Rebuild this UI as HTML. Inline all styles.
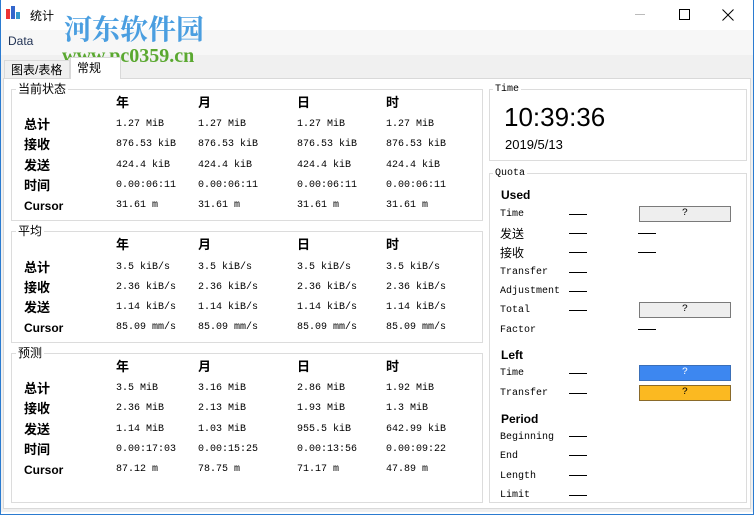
<!DOCTYPE html>
<html><head><meta charset="utf-8"><style>
*{margin:0;padding:0;box-sizing:border-box}
body{width:754px;height:515px;overflow:hidden;background:#fff;position:relative;font-family:"Liberation Sans","Noto Sans CJK SC",sans-serif;font-size:12px;color:#000}
.a{position:absolute;white-space:nowrap}
.g{position:absolute;border:1px solid #dcdcdc}
.gt{position:absolute;background:#fff;padding:0 2px;font-size:12px;line-height:14px}
.h{font-weight:bold;font-size:13px;line-height:14px}
.m{font-family:"Liberation Mono","Noto Sans CJK SC",monospace;font-size:10px;line-height:16px}
.mono{font-family:"Liberation Mono",monospace;font-size:10px;line-height:15px}
.d{position:absolute;width:18px;height:1px;background:#000}
.btn{position:absolute;width:92px;height:16px;border:1px solid #7a7a7a;background:#eee;text-align:center;font-family:"Liberation Mono",monospace;font-size:10px;line-height:14px}
</style></head><body>
<div class="a" style="left:0;top:0;width:754px;height:515px;border:1px solid #2b7bd0;border-top:none"></div>
<div class="a" style="left:1px;top:30px;width:752px;height:25px;background:#f7f7f7"></div>
<div class="a" style="left:1px;top:55px;width:752px;height:24px;background:#f0f0f0"></div>
<div class="a" style="left:1px;top:79px;width:752px;height:433px;background:#f0f0f0"></div>
<div class="a" style="left:6px;top:9px;width:4px;height:10px;background:#e33"></div>
<div class="a" style="left:11px;top:6px;width:4px;height:13px;background:#36c"></div>
<div class="a" style="left:16px;top:12px;width:4px;height:7px;background:#39c"></div>
<div class="a" style="left:30px;top:7px;font-size:12px">统计</div>
<div class="a" style="left:8px;top:34px;font-size:12px;color:#235">Data</div>
<div class="a" style="left:64px;top:12px;font-size:28px;font-weight:bold;color:#4a9ee0;font-family:'Noto Serif CJK SC',serif;line-height:32px">河东软件园</div>
<div class="a" style="left:62px;top:45px;font-size:20px;font-weight:bold;color:#5aa830;font-family:'Liberation Serif',serif;line-height:22px">www.pc0359.cn</div>
<div class="a" style="left:635px;top:14px;width:10px;height:1px;background:#bbb"></div>
<div class="a" style="left:679px;top:9px;width:11px;height:11px;border:1px solid #000"></div>
<svg class="a" style="left:722px;top:9px" width="12" height="12"><path d="M0.5 0.5L11.5 11.5M11.5 0.5L0.5 11.5" stroke="#000" stroke-width="1"/></svg>
<div class="a" style="left:4px;top:60px;width:66px;height:19px;border:1px solid #d9d9d9;border-bottom:none;background:#f0f0f0;font-size:12px;line-height:18px;padding-left:6px">图表/表格</div>
<div class="a" style="left:70px;top:57px;width:51px;height:23px;border:1px solid #d9d9d9;border-bottom:none;background:#fff;font-size:12px;line-height:20px;padding-left:6px">常规</div>
<div class="a" style="left:3px;top:78px;width:748px;height:431px;background:#fff;border:1px solid #d9d9d9"></div>
<div class="a" style="left:71px;top:78px;width:49px;height:2px;background:#fff"></div>

<div class="g" style="left:11px;top:89px;width:472px;height:132px"></div><div class="gt" style="left:16px;top:82px">当前状态</div>
<div class="g" style="left:11px;top:231px;width:472px;height:112px"></div><div class="gt" style="left:16px;top:224px">平均</div>
<div class="g" style="left:11px;top:353px;width:472px;height:150px"></div><div class="gt" style="left:16px;top:346px">预测</div>
<div class="g" style="left:489px;top:89px;width:258px;height:72px"></div><div class="gt mono" style="left:493px;top:82px;font-size:10px">Time</div>
<div class="g" style="left:489px;top:173px;width:258px;height:330px"></div><div class="gt mono" style="left:493px;top:166px;font-size:10px">Quota</div>

<div class="a h" style="left:116px;top:96px">年</div><div class="a h" style="left:198px;top:96px">月</div><div class="a h" style="left:297px;top:96px">日</div><div class="a h" style="left:386px;top:96px">时</div>
<div class="a h" style="left:24px;top:118px">总计</div><div class="a h" style="left:24px;top:138px">接收</div><div class="a h" style="left:24px;top:159px">发送</div><div class="a h" style="left:24px;top:179px">时间</div><div class="a h" style="left:24px;top:199px;font-size:12px">Cursor</div>
<div class="a m" style="left:116px;top:117px">1.27 MiB</div><div class="a m" style="left:198px;top:117px">1.27 MiB</div><div class="a m" style="left:297px;top:117px">1.27 MiB</div><div class="a m" style="left:386px;top:117px">1.27 MiB</div>
<div class="a m" style="left:116px;top:137px">876.53 kiB</div><div class="a m" style="left:198px;top:137px">876.53 kiB</div><div class="a m" style="left:297px;top:137px">876.53 kiB</div><div class="a m" style="left:386px;top:137px">876.53 kiB</div>
<div class="a m" style="left:116px;top:158px">424.4 kiB</div><div class="a m" style="left:198px;top:158px">424.4 kiB</div><div class="a m" style="left:297px;top:158px">424.4 kiB</div><div class="a m" style="left:386px;top:158px">424.4 kiB</div>
<div class="a m" style="left:116px;top:178px">0.00:06:11</div><div class="a m" style="left:198px;top:178px">0.00:06:11</div><div class="a m" style="left:297px;top:178px">0.00:06:11</div><div class="a m" style="left:386px;top:178px">0.00:06:11</div>
<div class="a m" style="left:116px;top:198px">31.61 m</div><div class="a m" style="left:198px;top:198px">31.61 m</div><div class="a m" style="left:297px;top:198px">31.61 m</div><div class="a m" style="left:386px;top:198px">31.61 m</div>

<div class="a h" style="left:116px;top:238px">年</div><div class="a h" style="left:198px;top:238px">月</div><div class="a h" style="left:297px;top:238px">日</div><div class="a h" style="left:386px;top:238px">时</div>
<div class="a h" style="left:24px;top:261px">总计</div><div class="a h" style="left:24px;top:281px">接收</div><div class="a h" style="left:24px;top:301px">发送</div><div class="a h" style="left:24px;top:321px;font-size:12px">Cursor</div>
<div class="a m" style="left:116px;top:260px">3.5 kiB/s</div><div class="a m" style="left:198px;top:260px">3.5 kiB/s</div><div class="a m" style="left:297px;top:260px">3.5 kiB/s</div><div class="a m" style="left:386px;top:260px">3.5 kiB/s</div>
<div class="a m" style="left:116px;top:280px">2.36 kiB/s</div><div class="a m" style="left:198px;top:280px">2.36 kiB/s</div><div class="a m" style="left:297px;top:280px">2.36 kiB/s</div><div class="a m" style="left:386px;top:280px">2.36 kiB/s</div>
<div class="a m" style="left:116px;top:300px">1.14 kiB/s</div><div class="a m" style="left:198px;top:300px">1.14 kiB/s</div><div class="a m" style="left:297px;top:300px">1.14 kiB/s</div><div class="a m" style="left:386px;top:300px">1.14 kiB/s</div>
<div class="a m" style="left:116px;top:320px">85.09 mm/s</div><div class="a m" style="left:198px;top:320px">85.09 mm/s</div><div class="a m" style="left:297px;top:320px">85.09 mm/s</div><div class="a m" style="left:386px;top:320px">85.09 mm/s</div>

<div class="a h" style="left:116px;top:360px">年</div><div class="a h" style="left:198px;top:360px">月</div><div class="a h" style="left:297px;top:360px">日</div><div class="a h" style="left:386px;top:360px">时</div>
<div class="a h" style="left:24px;top:382px">总计</div><div class="a h" style="left:24px;top:402px">接收</div><div class="a h" style="left:24px;top:423px">发送</div><div class="a h" style="left:24px;top:443px">时间</div><div class="a h" style="left:24px;top:463px;font-size:12px">Cursor</div>
<div class="a m" style="left:116px;top:381px">3.5 MiB</div><div class="a m" style="left:198px;top:381px">3.16 MiB</div><div class="a m" style="left:297px;top:381px">2.86 MiB</div><div class="a m" style="left:386px;top:381px">1.92 MiB</div>
<div class="a m" style="left:116px;top:401px">2.36 MiB</div><div class="a m" style="left:198px;top:401px">2.13 MiB</div><div class="a m" style="left:297px;top:401px">1.93 MiB</div><div class="a m" style="left:386px;top:401px">1.3 MiB</div>
<div class="a m" style="left:116px;top:422px">1.14 MiB</div><div class="a m" style="left:198px;top:422px">1.03 MiB</div><div class="a m" style="left:297px;top:422px">955.5 kiB</div><div class="a m" style="left:386px;top:422px">642.99 kiB</div>
<div class="a m" style="left:116px;top:442px">0.00:17:03</div><div class="a m" style="left:198px;top:442px">0.00:15:25</div><div class="a m" style="left:297px;top:442px">0.00:13:56</div><div class="a m" style="left:386px;top:442px">0.00:09:22</div>
<div class="a m" style="left:116px;top:462px">87.12 m</div><div class="a m" style="left:198px;top:462px">78.75 m</div><div class="a m" style="left:297px;top:462px">71.17 m</div><div class="a m" style="left:386px;top:462px">47.89 m</div>

<div class="a" style="left:504px;top:102px;font-size:26px;line-height:30px">10:39:36</div>
<div class="a" style="left:505px;top:137px;font-size:13px;line-height:15px">2019/5/13</div>

<div class="a h" style="left:501px;top:188px;font-size:12px">Used</div>
<div class="a mono" style="left:500px;top:207px">Time</div><div class="d" style="left:569px;top:214px"></div><div class="btn" style="left:639px;top:206px">?</div>
<div class="a" style="left:500px;top:225px;font-size:12px">发送</div><div class="d" style="left:569px;top:233px"></div><div class="d" style="left:638px;top:233px"></div>
<div class="a" style="left:500px;top:244px;font-size:12px">接收</div><div class="d" style="left:569px;top:252px"></div><div class="d" style="left:638px;top:252px"></div>
<div class="a mono" style="left:500px;top:265px">Transfer</div><div class="d" style="left:569px;top:272px"></div>
<div class="a mono" style="left:500px;top:284px">Adjustment</div><div class="d" style="left:569px;top:291px"></div>
<div class="a mono" style="left:500px;top:303px">Total</div><div class="d" style="left:569px;top:310px"></div><div class="btn" style="left:639px;top:302px">?</div>
<div class="a mono" style="left:500px;top:323px">Factor</div><div class="d" style="left:638px;top:329px"></div>
<div class="a h" style="left:501px;top:348px;font-size:12px">Left</div>
<div class="a mono" style="left:500px;top:366px">Time</div><div class="d" style="left:569px;top:373px"></div><div class="btn" style="left:639px;top:365px;background:#3d87f0;color:#fff;border-color:#3a6fb8">?</div>
<div class="a mono" style="left:500px;top:386px">Transfer</div><div class="d" style="left:569px;top:393px"></div><div class="btn" style="left:639px;top:385px;background:#fbb921;border-color:#8a6a2a">?</div>
<div class="a h" style="left:501px;top:412px;font-size:12px">Period</div>
<div class="a mono" style="left:500px;top:430px">Beginning</div><div class="d" style="left:569px;top:436px"></div>
<div class="a mono" style="left:500px;top:449px">End</div><div class="d" style="left:569px;top:455px"></div>
<div class="a mono" style="left:500px;top:469px">Length</div><div class="d" style="left:569px;top:475px"></div>
<div class="a mono" style="left:500px;top:488px">Limit</div><div class="d" style="left:569px;top:495px"></div>
</body></html>
